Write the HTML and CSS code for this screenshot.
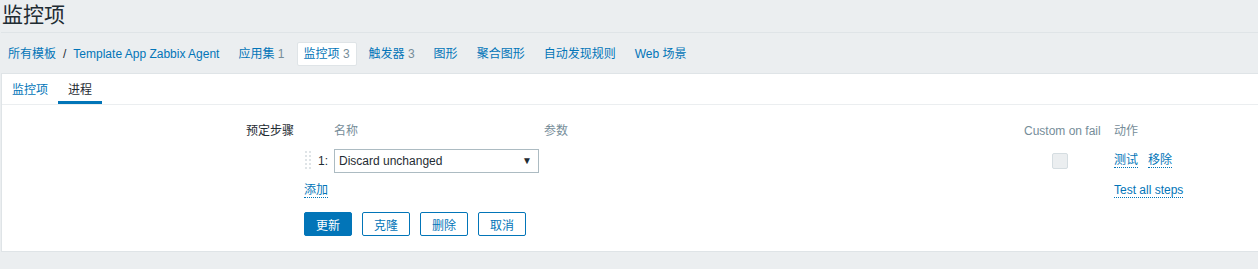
FILE: index.html
```html
<!DOCTYPE html>
<html>
<head>
<meta charset="utf-8">
<link rel="stylesheet" href="styles.css">
</head>
<body>
<div class="page">
  <header class="header">
    <h1 class="title">监控项</h1>
  </header>
  <nav class="nav">
    <div class="nav-item"><a class="link">所有模板</a><span class="sep">/</span><a class="link">Template App Zabbix Agent</a></div>
    <div class="nav-item"><a class="link">应用集</a> <span class="count">1</span></div>
    <div class="nav-item active"><a class="link">监控项</a> <span class="count">3</span></div>
    <div class="nav-item"><a class="link">触发器</a> <span class="count">3</span></div>
    <div class="nav-item"><a class="link">图形</a></div>
    <div class="nav-item"><a class="link">聚合图形</a></div>
    <div class="nav-item"><a class="link">自动发现规则</a></div>
    <div class="nav-item"><a class="link">Web 场景</a></div>
  </nav>
  <main class="box">
    <div class="tabs">
      <div class="tab"><a class="link">监控项</a></div>
      <div class="tab tab-active">进程</div>
    </div>
    <div class="form">
      <div class="form-row">
        <div class="label">预定步骤</div>
        <div class="steps">
          <div class="th"></div>
          <div class="th"></div>
          <div class="th">名称</div>
          <div class="th">参数</div>
          <div class="th th-custom">Custom on fail</div>
          <div class="th">动作</div>

          <div class="cell drag">
            <svg width="6" height="20" viewBox="0 0 6 20">
              <g fill="#dfe4e7">
                <rect x="0" y="0" width="2" height="2"/><rect x="4" y="0" width="2" height="2"/>
                <rect x="0" y="4" width="2" height="2"/><rect x="4" y="4" width="2" height="2"/>
                <rect x="0" y="8" width="2" height="2"/><rect x="4" y="8" width="2" height="2"/>
                <rect x="0" y="12" width="2" height="2"/><rect x="4" y="12" width="2" height="2"/>
                <rect x="0" y="16" width="2" height="2"/><rect x="4" y="16" width="2" height="2"/>
              </g>
            </svg>
          </div>
          <div class="cell num">1:</div>
          <div class="cell">
            <div class="select"><span>Discard unchanged</span><span class="arrow">▼</span></div>
          </div>
          <div class="cell"></div>
          <div class="cell check"><span class="checkbox"></span></div>
          <div class="cell actions"><a class="dlink">测试</a><a class="dlink">移除</a></div>

          <div class="cell add"><a class="dlink">添加</a></div>
          <div class="cell actions"><a class="dlink">Test all steps</a></div>
        </div>
      </div>
      <div class="buttons">
        <button class="btn btn-primary">更新</button>
        <button class="btn">克隆</button>
        <button class="btn">删除</button>
        <button class="btn">取消</button>
      </div>
    </div>
  </main>
</div>
</body>
</html>
```

FILE: styles.css
```css
* { box-sizing: border-box; }
html, body {
  margin: 0;
  padding: 0;
  background: #ebeef0;
}
body {
  font-family: "Liberation Sans", Arial, "Noto Sans CJK SC", sans-serif;
  font-size: 12px;
  color: #1f2c33;
  line-height: 14px;
}
.page {
  margin-left: 1px;
}
.header {
  height: 33px;
  border-bottom: 1px solid #dfe4e7;
}
.title {
  margin: 0;
  padding: 3px 0 0 1px;
  font-size: 21px;
  line-height: 24px;
  font-weight: normal;
  color: #1f2c33;
}
.nav {
  height: 40px;
  display: flex;
  align-items: center;
  padding-top: 1px;
}
.link {
  color: #0275b8;
  text-decoration: none;
}
.nav-item {
  padding: 4px 6px;
  margin-right: 5px;
  border: 1px solid transparent;
  border-radius: 2px;
  white-space: nowrap;
}
.nav-item.active {
  background: #fff;
  border-color: #dfe4e7;
}
.sep {
  margin: 0 7px;
  color: #1f2c33;
}
.count {
  color: #768d99;
}
.box {
  background: #fff;
  border: 1px solid #dfe4e7;
  border-right: none;
  height: 179px;
}
.tabs {
  display: flex;
  height: 31px;
  border-bottom: 1px solid #ebeef0;
}
.tab {
  padding: 0 10px;
  height: 30px;
  display: flex;
  align-items: center;
  padding-top: 1px;
}
.tab-active {
  color: #1f2c33;
  border-bottom: 3px solid #0275b8;
  padding-top: 4px;
}
.form {
  padding-top: 16px;
}
.form-row {
  display: flex;
}
.label {
  width: 302px;
  text-align: right;
  padding-right: 10px;
  line-height: 20px;
}
.steps {
  display: grid;
  grid-template-columns: 14px 16px 210px 480px 90px auto;
  grid-template-rows: 20px 25px 20px;
  row-gap: 7px;
}
.th {
  color: #768d99;
  line-height: 20px;
  white-space: nowrap;
}
.cell {
  display: flex;
  align-items: center;
}
.drag {
  padding-left: 1px;
}
.num {
  justify-content: flex-end;
  padding-right: 6px;
}
.select {
  width: 205px;
  height: 24px;
  border: 1px solid #acbbc2;
  background: #fff;
  display: flex;
  align-items: center;
  justify-content: space-between;
  padding: 0 6px 0 4px;
  color: #1f2c33;
}
.arrow {
  font-size: 10px;
  color: #1f2c33;
}
.check {
  padding-left: 28px;
}
.checkbox {
  display: block;
  width: 16px;
  height: 16px;
  background: #ebeef0;
  border: 1px solid #d5dde1;
  border-radius: 2px;
}
.actions {
  gap: 10px;
}
.dlink {
  color: #0275b8;
  border-bottom: 1px dotted #0275b8;
  line-height: 14px;
  white-space: nowrap;
}
.add {
  grid-column: 1 / 6;
}
.buttons {
  display: flex;
  gap: 10px;
  padding-left: 302px;
  margin-top: 12px;
}
.btn {
  width: 48px;
  height: 24px;
  border: 1px solid #0275b8;
  border-radius: 2px;
  background: #fff;
  color: #0275b8;
  font-family: "Liberation Sans", Arial, "Noto Sans CJK SC", sans-serif;
  font-size: 12px;
  padding: 0;
}
.btn-primary {
  background: #0275b8;
  color: #fff;
}
```
